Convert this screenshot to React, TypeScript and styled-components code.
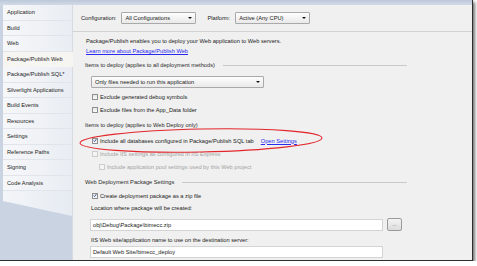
import React from "react";
import styled, { createGlobalStyle } from "styled-components";

const Global = createGlobalStyle`
  html, body { margin: 0; padding: 0; background: #ffffff; }
  body {
    font-family: "Liberation Sans", Arial, sans-serif;
    font-size: 5.7px;
    color: #1a1a1a;
  }
`;

const Frame = styled.div`
  position: relative;
  width: 472px;
  height: 260px;
  border-right: 1px solid #2e2e2e;
  border-bottom: 1px solid #2e2e2e;
  box-shadow: 2px 2px 3px rgba(0, 0, 0, 0.55);
  display: grid;
  grid-template-rows: 5px 1fr;
  background: #f0f0f0;
`;

const TopBar = styled.div`
  background: linear-gradient(#bcc8d9, #d2dae6);
`;

const Main = styled.div`
  display: grid;
  grid-template-columns: 73px 1fr;
  min-height: 0;
`;

const Sidebar = styled.div`
  display: flex;
  flex-direction: column;
  background: #c9d3e2;
  padding-left: 3px;
  border-right: 1px solid #d6dbe3;
`;

const Tab = styled.div<{ $active?: boolean }>`
  height: 15.5px;
  flex: none;
  display: flex;
  align-items: center;
  padding-left: 4px;
  box-sizing: border-box;
  color: #1e1e1e;
  background: ${(p) =>
    p.$active ? "#f6f5f2" : "linear-gradient(to right, #f6f7f9, #e9edf3)"};
  border-bottom: 1px solid ${(p) => (p.$active ? "#f6f5f2" : "#e1e5eb")};
  margin-right: ${(p) => (p.$active ? "-1px" : "0")};
`;

const SidebarTail = styled.div`
  position: relative;
  flex: 1;
  &::before {
    content: "";
    position: absolute;
    inset: 0;
    background: linear-gradient(to right, #f3f5f8, #e6ebf2);
    clip-path: polygon(0 0, 100% 0, 100% 25px, 0 10px);
  }
`;

const Content = styled.div`
  display: flex;
  flex-direction: column;
`;

const Toolbar = styled.div`
  height: 27px;
  flex: none;
  display: flex;
  align-items: center;
  padding-left: 8px;
  border-bottom: 1px solid #d2d2d2;
  box-sizing: border-box;
`;

const ToolLabel = styled.span<{ $gapLeft?: number }>`
  margin-left: ${(p) => p.$gapLeft ?? 0}px;
  margin-right: 5px;
  white-space: nowrap;
`;

const Combo = styled.div<{ $w: number }>`
  width: ${(p) => p.$w}px;
  height: 12px;
  box-sizing: border-box;
  border: 1px solid #a9a9a9;
  border-radius: 1px;
  background: linear-gradient(#fdfdfd, #e9e9e9);
  display: flex;
  align-items: center;
  justify-content: space-between;
  padding: 0 3px 0 3px;
  white-space: nowrap;
`;

const Arrow = styled.span`
  width: 0;
  height: 0;
  border-left: 2px solid transparent;
  border-right: 2px solid transparent;
  border-top: 2px solid #111;
`;

const Body = styled.div`
  display: flex;
  flex-direction: column;
  padding: 4px 0 0 12px;
`;

const Line = styled.div<{ $top?: number; $left?: number; $color?: string }>`
  height: 10px;
  line-height: 10px;
  margin-top: ${(p) => p.$top ?? 0}px;
  margin-left: ${(p) => p.$left ?? 0}px;
  color: ${(p) => p.$color ?? "#1a1a1a"};
  white-space: nowrap;
`;

const Link = styled.span`
  color: #2a2af0;
  text-decoration: underline;
`;

const Heading = styled.div<{ $top: number; $line?: boolean }>`
  width: 322px;
  height: 10px;
  margin-top: ${(p) => p.$top}px;
  display: flex;
  align-items: center;
  gap: 8px;
  color: #2a2a2a;
  white-space: nowrap;
  &::after {
    content: "";
    flex: 1;
    height: 1px;
    background: ${(p) => (p.$line ? "#c9c9c9" : "transparent")};
  }
`;

const Dropdown = styled(Combo)`
  margin-top: 6px;
  margin-left: 6px;
`;

const CheckRow = styled.div<{ $indent: number; $disabled?: boolean; $top?: number }>`
  height: 13px;
  display: flex;
  align-items: center;
  gap: 2px;
  margin-left: ${(p) => p.$indent}px;
  margin-top: ${(p) => p.$top ?? 0}px;
  color: ${(p) => (p.$disabled ? "#a3a3a3" : "#1a1a1a")};
  white-space: nowrap;
`;

const Box = styled.span<{ $disabled?: boolean }>`
  width: 6px;
  height: 6px;
  box-sizing: border-box;
  border: 1px solid ${(p) => (p.$disabled ? "#cdcdcd" : "#8e8f8f")};
  background: ${(p) => (p.$disabled ? "#f4f4f4" : "linear-gradient(#e6e6e6, #fbfbfb)")};
  display: flex;
  align-items: center;
  justify-content: center;
  flex: none;
`;

const LinkGap = styled.span`
  margin-left: 5px;
`;

const TextBoxRow = styled.div<{ $top: number }>`
  display: flex;
  align-items: center;
  gap: 4px;
  margin-top: ${(p) => p.$top}px;
  margin-left: 5px;
`;

const TextBox = styled.div<{ $h: number }>`
  width: 293px;
  height: ${(p) => p.$h}px;
  box-sizing: border-box;
  background: #ffffff;
  border: 1px solid #d4d4d4;
  display: flex;
  align-items: center;
  padding-left: 2px;
  white-space: nowrap;
`;

const BrowseButton = styled.div`
  width: 15px;
  height: 13px;
  box-sizing: border-box;
  border: 1px solid #9a9a9a;
  border-radius: 2px;
  background: linear-gradient(#f4f4f4, #dcdcdc);
  display: flex;
  align-items: center;
  justify-content: center;
  color: #555;
  font-size: 5px;
  line-height: 1;
`;

const Annotation = styled.svg`
  position: absolute;
  left: 76px;
  top: 124px;
  pointer-events: none;
`;

const Check = ({ on, disabled }: { on?: boolean; disabled?: boolean }) => (
  <Box $disabled={disabled}>
    {on && (
      <svg width="5" height="5" viewBox="0 0 5 5">
        <path d="M0.8 2.6 L2 3.9 L4.2 0.8" fill="none" stroke="#2c3f8f" strokeWidth="1" />
      </svg>
    )}
  </Box>
);

const tabs = [
  "Application",
  "Build",
  "Web",
  "Package/Publish Web",
  "Package/Publish SQL*",
  "Silverlight Applications",
  "Build Events",
  "Resources",
  "Settings",
  "Reference Paths",
  "Signing",
  "Code Analysis",
];

export default function App() {
  return (
    <>
      <Global />
      <Frame>
        <TopBar />
        <Main>
          <Sidebar>
            {tabs.map((t) => (
              <Tab key={t} $active={t === "Package/Publish Web"}>
                {t}
              </Tab>
            ))}
            <SidebarTail />
          </Sidebar>
          <Content>
            <Toolbar>
              <ToolLabel>Configuration:</ToolLabel>
              <Combo $w={75}>
                All Configurations
                <Arrow />
              </Combo>
              <ToolLabel $gapLeft={11}>Platform:</ToolLabel>
              <Combo $w={75}>
                Active (Any CPU)
                <Arrow />
              </Combo>
            </Toolbar>
            <Body>
              <Line $left={1}>
                Package/Publish enables you to deploy your Web application to Web servers.
              </Line>
              <Line $left={1}>
                <Link>Learn more about Package/Publish Web</Link>
              </Line>
              <Heading $top={4} $line>
                Items to deploy (applies to all deployment methods)
              </Heading>
              <Dropdown $w={173}>
                Only files needed to run this application
                <Arrow />
              </Dropdown>
              <CheckRow $indent={7} $top={2}>
                <Check />
                Exclude generated debug symbols
              </CheckRow>
              <CheckRow $indent={7}>
                <Check />
                Exclude files from the App_Data folder
              </CheckRow>
              <Heading $top={4}>Items to deploy (applies to Web Deploy only)</Heading>
              <CheckRow $indent={7} $top={4}>
                <Check on />
                Include all databases configured in Package/Publish SQL tab
                <LinkGap>
                  <Link>Open Settings</Link>
                </LinkGap>
              </CheckRow>
              <CheckRow $indent={7} $disabled>
                <Check disabled />
                Include IIS settings as configured in IIS Express
              </CheckRow>
              <CheckRow $indent={14} $disabled>
                <Check disabled />
                Include application pool settings used by this Web project
              </CheckRow>
              <Heading $top={4} $line>
                Web Deployment Package Settings
              </Heading>
              <CheckRow $indent={7} $top={2}>
                <Check on />
                Create deployment package as a zip file
              </CheckRow>
              <Line $left={6} $top={1}>
                Location where package will be created:
              </Line>
              <TextBoxRow $top={5}>
                <TextBox $h={12}>obj\Debug\Package\bimecc.zip</TextBox>
                <BrowseButton>...</BrowseButton>
              </TextBoxRow>
              <Line $left={6} $top={4}>
                IIS Web site/application name to use on the destination server:
              </Line>
              <TextBoxRow $top={1}>
                <TextBox $h={12}>Default Web Site/bimecc_deploy</TextBox>
              </TextBoxRow>
            </Body>
          </Content>
        </Main>
        <Annotation width="252" height="34" viewBox="0 0 252 34">
          <ellipse
            cx="125"
            cy="16.5"
            rx="121"
            ry="11.5"
            fill="none"
            stroke="#e2262b"
            strokeWidth="1.1"
            transform="rotate(-1.2 125 16.5)"
          />
        </Annotation>
      </Frame>
    </>
  );
}
